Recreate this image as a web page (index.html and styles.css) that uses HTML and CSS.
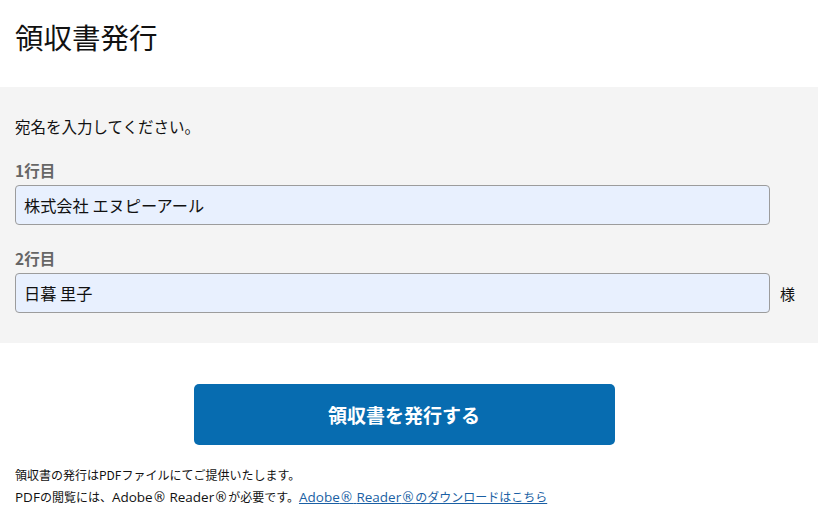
FILE: index.html
```html
<!DOCTYPE html>
<html lang="ja">
<head>
<meta charset="utf-8">
<title>領収書発行</title>
<link rel="stylesheet" href="styles.css">
</head>
<body>
<header class="header">
  <h1 class="title">領収書発行</h1>
</header>
<section class="form-area">
  <p class="lead">宛名を入力してください。</p>
  <div class="field">
    <label class="label" for="l1">1行目</label>
    <div class="row">
      <input id="l1" class="input" type="text" value="株式会社 エヌピーアール">
      <span class="suffix"></span>
    </div>
  </div>
  <div class="field">
    <label class="label" for="l2">2行目</label>
    <div class="row">
      <input id="l2" class="input" type="text" value="日暮 里子">
      <span class="suffix">様</span>
    </div>
  </div>
</section>
<div class="actions">
  <button class="btn" type="button">領収書を発行する</button>
</div>
<div class="notes">
  <p>領収書の発行はPDFファイルにてご提供いたします。</p>
  <p><span class="lat">PDF</span>の閲覧には、<span class="lat">Adobe</span><span class="reg">®</span> <span class="lat">Reader</span><span class="reg">®</span>が必要です。<a href="#" class="link"><span class="lat">Adobe</span><span class="reg">®</span> <span class="lat">Reader</span><span class="reg">®</span>のダウンロードはこちら</a></p>
</div>
</body>
</html>
```
FILE: styles.css
```css
html, body {
  margin: 0;
  padding: 0;
  background: #fff;
  color: #111;
  font-family: "Noto Sans CJK JP", "Noto Sans", sans-serif;
}
.header {
  height: 87px;
  padding: 0 15px 14px;
  box-sizing: border-box;
  display: flex;
  align-items: center;
}
.title {
  margin: 0;
  font-size: 28.5px;
  font-weight: 400;
  line-height: 42px;
  color: #111;
}
.form-area {
  background: #f4f4f4;
  padding: 28px 23px 30px 15px;
}
.lead {
  margin: 0;
  font-size: 15.5px;
  line-height: 22px;
}
.field {
  margin-top: 22px;
}
.label {
  display: block;
  font-size: 15.5px;
  font-weight: 700;
  line-height: 22px;
  color: #666;
  margin-bottom: 4px;
}
.row {
  display: flex;
  align-items: center;
  gap: 10px;
}
.input {
  width: 755px;
  flex: none;
  height: 40px;
  box-sizing: border-box;
  border: 1px solid #9c9c9c;
  border-radius: 4px;
  background: #e8f0fe;
  padding: 0 8px;
  font-family: "Noto Sans CJK JP", "Noto Sans", sans-serif;
  font-size: 16.2px;
  color: #111;
}
.suffix {
  font-size: 15px;
  width: 15px;
}
.actions {
  display: flex;
  justify-content: center;
  padding: 41px 10px 0 0;
}
.btn {
  width: 421px;
  height: 61px;
  border: none;
  border-radius: 5px;
  background: #076cb0;
  color: #fff;
  font-family: "Noto Sans CJK JP", "Noto Sans", sans-serif;
  font-size: 19px;
  font-weight: 700;
}
.notes {
  padding: 19px 15px 0;
}
.notes p {
  margin: 0;
  font-family: "Noto Sans CJK JP", "Noto Sans", sans-serif;
  font-size: 12px;
  line-height: 22px;
}
.lat {
  font-family: "Open Sans", "Noto Sans", sans-serif;
  font-size: 13.5px;
}
.reg {
  font-family: "DejaVu Sans", sans-serif;
  font-size: 13.5px;
  letter-spacing: 0.5px;
}
.link {
  color: #1a5fa4;
}
```
